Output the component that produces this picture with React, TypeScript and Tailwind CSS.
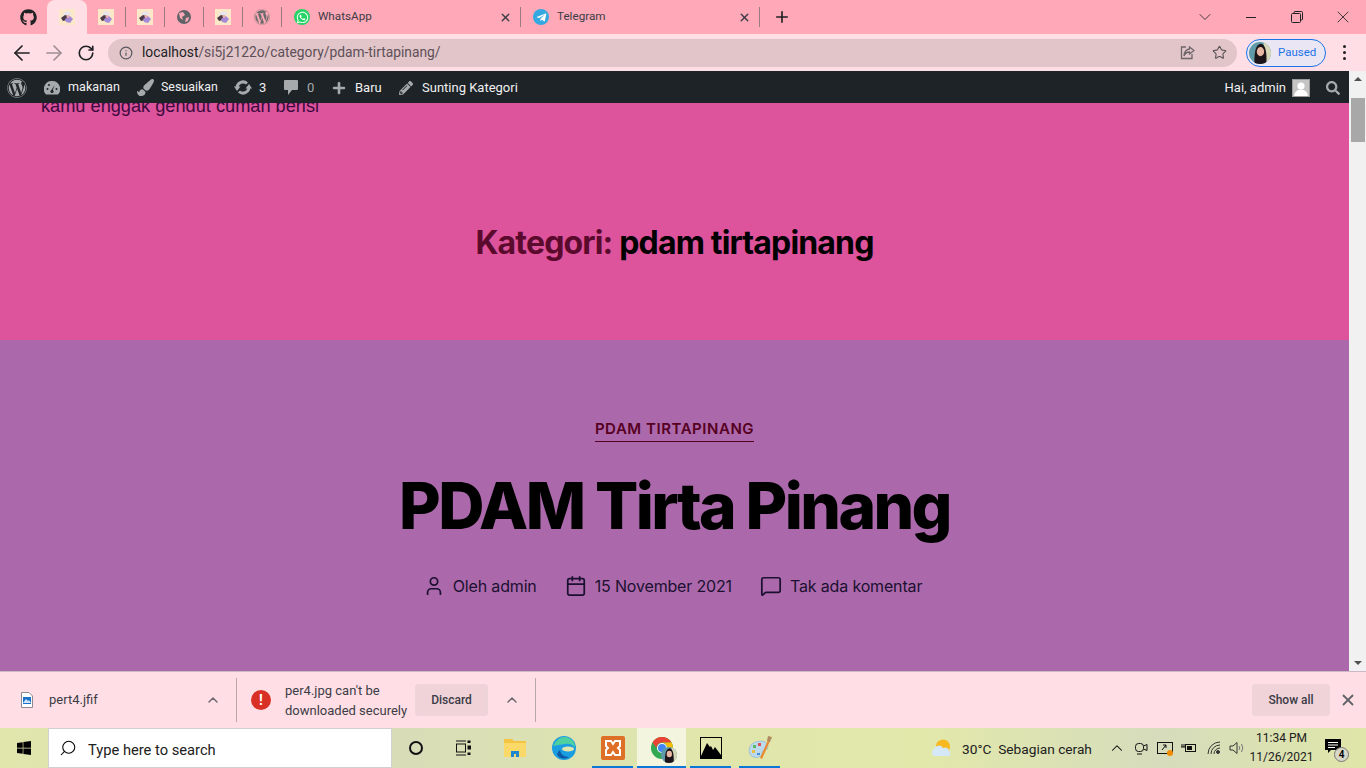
import { ReactNode } from "react";
import {
  ArrowLeft,
  ArrowRight,
  Calendar,
  ChevronDown,
  ChevronUp,
  Info,
  MessageSquare,
  Plus,
  RotateCw,
  Search,
  Star,
  User,
  X,
} from "lucide-react";
import {
  FaGithub,
  FaWhatsapp,
  FaWordpress,
  FaPaintBrush,
  FaPlus,
  FaPencilAlt,
  FaSearch,
  FaWindows,
  FaTelegramPlane,
} from "react-icons/fa";

const Favicon = () => (
  <svg width="16" height="16" viewBox="0 0 16 16">
    <rect width="16" height="16" fill="#fbe8c8" />
    <path d="M4 5 Q8 0 12 4 L12 6 H4 Z" fill="#e8e4ec" />
    <path d="M2 9 L6 6 L9 7 L8 11 L4 12 Z" fill="#4a3a48" />
    <path d="M6 10 L11 7 L14 10 L11 14 L7 13 Z" fill="#a58ad8" />
    <circle cx="9" cy="7.5" r="1.5" fill="#e8a8b0" />
  </svg>
);

const Sep = () => <div className="h-[20px] w-px bg-[#9c7a82]" />;

const SmallTab = ({ children }: { children: ReactNode }) => (
  <div className="flex h-[34px] w-[38px] items-center justify-center">{children}</div>
);

const LongTab = ({ icon, title }: { icon: ReactNode; title: string }) => (
  <div className="flex h-[34px] w-[238px] items-center pl-[12px] pr-[8px]">
    {icon}
    <span className="ml-[8px] flex-1 text-[11.7px] text-[#3c3c46]">{title}</span>
    <X size={13} strokeWidth={2.5} className="text-[#3c3c46]" />
  </div>
);

const TabBar = () => (
  <div className="flex h-[34px] items-center bg-[#ffa9b8]">
    <div className="flex w-[47px] items-center justify-center pl-[9px]">
      <FaGithub size={17} className="text-[#202124]" />
    </div>
    <div className="flex h-[34px] w-[40px] items-center justify-center rounded-t-[8px] bg-[#ffdfe5]">
      <Favicon />
    </div>
    <SmallTab>
      <Favicon />
    </SmallTab>
    <Sep />
    <SmallTab>
      <Favicon />
    </SmallTab>
    <Sep />
    <SmallTab>
      <svg width="16" height="16" viewBox="0 0 16 16">
        <circle cx="8" cy="8" r="7" fill="#5f6368" />
        <path d="M3 4 L7 3 L9 6 L6 8 L7 11 L4 9 Z M10 9 L13 8 L12 12 L9 13 Z" fill="#ffa9b8" />
      </svg>
    </SmallTab>
    <Sep />
    <SmallTab>
      <Favicon />
    </SmallTab>
    <Sep />
    <SmallTab>
      <FaWordpress size={16} className="text-[#6b6b6b]" />
    </SmallTab>
    <Sep />
    <LongTab
      title="WhatsApp"
      icon={
        <div className="flex h-[16px] w-[16px] items-center justify-center rounded-full bg-[#25d366]">
          <FaWhatsapp size={13} className="text-white" />
        </div>
      }
    />
    <Sep />
    <LongTab
      title="Telegram"
      icon={
        <div className="flex h-[16px] w-[16px] items-center justify-center rounded-full bg-[#34a8e0]">
          <FaTelegramPlane size={11} className="text-white" />
        </div>
      }
    />
    <Sep />
    <Plus size={18} strokeWidth={2.2} className="ml-[13px] text-[#202124]" />
    <div className="ml-auto flex items-center text-[#202124]">
      <ChevronDown size={20} strokeWidth={1} className="mr-[31px]" />
      <div className="mr-[35px] h-px w-[10px] bg-[#202124]" />
      <svg width="12" height="12" viewBox="0 0 12 12" fill="none" stroke="#202124" className="mr-[30px]">
        <rect x="0.5" y="2.5" width="9" height="9" rx="1" />
        <path d="M3 2.5 V1.5 a1 1 0 0 1 1 -1 H10.5 a1 1 0 0 1 1 1 V8 a1 1 0 0 1 -1 1 H9.5" />
      </svg>
      <X size={20} strokeWidth={1} className="mr-[13px]" />
    </div>
  </div>
);

const Avatar = ({ size }: { size: number }) => (
  <svg width={size} height={size} viewBox="0 0 24 24">
    <clipPath id={`av${size}`}>
      <circle cx="12" cy="12" r="12" />
    </clipPath>
    <g clipPath={`url(#av${size})`}>
      <rect width="24" height="24" fill="#5f9aa8" />
      <rect x="16" width="8" height="24" fill="#d8d8b8" />
      <path d="M6 24 Q5 3 13 2 Q20 3 19 24 Z" fill="#1c1418" />
      <ellipse cx="12.5" cy="10.5" rx="4" ry="5" fill="#e8b8a4" />
    </g>
  </svg>
);

const Toolbar = () => (
  <div className="flex h-[37px] items-center bg-[#ffdfe5]">
    <ArrowLeft size={24} strokeWidth={1.7} className="ml-[10px] text-[#202124]" />
    <ArrowRight size={24} strokeWidth={1.7} className="ml-[8px] text-[#a08e94]" />
    <RotateCw size={18} strokeWidth={2.2} className="ml-[11px] text-[#202124]" />
    <div className="ml-[13px] flex h-[28px] w-[1129px] items-center rounded-full bg-[#e1c5c9] pl-[11px] pr-[7px]">
      <Info size={14} strokeWidth={2} className="text-[#55555c]" />
      <span className="ml-[9px] text-[13.8px] text-[#5e5058]">
        <span className="text-[#202124]">localhost</span>/si5j2122o/category/pdam-tirtapinang/
      </span>
      <svg width="15" height="14" viewBox="0 0 15 14" fill="none" stroke="#6d6468" strokeWidth="1.3" className="ml-auto mr-[17px]">
        <path d="M6 1 H1.5 V12.5 H12 V8" />
        <path d="M9.5 1 L14 4.5 L9.5 8 V6 Q5.5 6 4 10 Q4.5 3.5 9.5 3 Z" />
      </svg>
      <Star size={15} strokeWidth={1.8} className="mr-[3px] text-[#5c5358]" />
    </div>
    <div className="ml-[9px] flex h-[28px] w-[80px] items-center rounded-full border border-[#1a73e8] bg-[#ebe6f4] pl-[2px]">
      <Avatar size={22} />
      <span className="ml-[7px] text-[11.5px] text-[#1a73e8]">Paused</span>
    </div>
    <div className="ml-[17px] flex flex-col gap-[3px]">
      <div className="h-[3px] w-[3px] rounded-full bg-[#202124]" />
      <div className="h-[3px] w-[3px] rounded-full bg-[#202124]" />
      <div className="h-[3px] w-[3px] rounded-full bg-[#202124]" />
    </div>
  </div>
);

const AdminBar = () => (
  <div className="flex h-[32px] items-center bg-[#1d2327] pt-[1px] text-[13px] whitespace-nowrap text-[#f0f0f1]">
    <FaWordpress size={20} className="ml-[7px] text-[#a7aaad]" />
    <svg width="16" height="14" viewBox="0 0 16 14" className="ml-[17px]">
      <path d="M8 0 A8 8 0 0 0 2 13.5 H14 A8 8 0 0 0 8 0 Z" fill="#a7aaad" />
      <path d="M8 11 L10.5 4.5 L7 9.5 Z" fill="#1d2327" />
      <circle cx="8" cy="10.5" r="1.6" fill="#1d2327" />
      <circle cx="3.5" cy="8" r="1" fill="#1d2327" />
      <circle cx="5" cy="4" r="1" fill="#1d2327" />
      <circle cx="12.5" cy="8" r="1" fill="#1d2327" />
    </svg>
    <span className="ml-[8px] w-[52px] text-[12.6px]">makanan</span>
    <FaPaintBrush size={17} className="ml-[17px] text-[#a7aaad]" />
    <span className="ml-[7px] w-[57px] text-[12.4px]">Sesuaikan</span>
    <svg width="18" height="15" viewBox="0 0 18 15" fill="none" className="ml-[16px]">
      <path d="M3 7.5 A6 6 0 0 1 13 3.5" stroke="#a7aaad" strokeWidth="3" />
      <path d="M15 7.5 A6 6 0 0 1 5 11.5" stroke="#a7aaad" strokeWidth="3" />
      <path d="M0 6.5 H6.5 L3 11 Z M18 8.5 H11.5 L15 4 Z" fill="#a7aaad" />
    </svg>
    <span className="ml-[7px] w-[7px]">3</span>
    <svg width="14" height="15" viewBox="0 0 14 15" className="ml-[18px]">
      <path d="M1 0 H13 a1 1 0 0 1 1 1 V9 a1 1 0 0 1 -1 1 H8 L4 15 V10 H1 a1 1 0 0 1 -1 -1 V1 a1 1 0 0 1 1 -1 Z" fill="#a7aaad" />
    </svg>
    <span className="ml-[9px] w-[7px] text-[#a7aaad]">0</span>
    <FaPlus size={14} className="ml-[18px] text-[#a7aaad]" />
    <span className="ml-[9px] w-[26px]">Baru</span>
    <FaPencilAlt size={14} className="ml-[18px] text-[#a7aaad]" />
    <span className="ml-[9px]">Sunting Kategori</span>
    <span className="ml-auto">Hai, admin</span>
    <div className="ml-[6px] flex h-[18px] w-[18px] items-end justify-center overflow-hidden border border-[#9a9a9a] bg-[#c4c4c4]">
      <svg width="14" height="15" viewBox="0 0 14 15" fill="#fff">
        <circle cx="7" cy="5" r="3.6" />
        <path d="M0 15 Q1 8.5 7 8.5 Q13 8.5 14 15 Z" />
      </svg>
    </div>
    <FaSearch size={14} className="ml-[16px] mr-[9px] text-[#a7aaad]" />
  </div>
);

const MetaItem = ({ icon, label }: { icon: ReactNode; label: string }) => (
  <div className="flex items-center gap-[8px]">
    {icon}
    <span>{label}</span>
  </div>
);

const Page = () => (
  <div className="h-[568px] overflow-hidden [font-family:Inter,sans-serif]">
    <header className="h-[237px] overflow-hidden bg-[#dd539c]">
      <p className="-mt-[8px] pl-[41px] text-[18.2px] leading-[22px] text-[#3d0a3f] [font-family:'Liberation_Sans',sans-serif]">
        kamu enggak gendut cuman berisi
      </p>
      <h1 className="mt-[106px] text-center text-[32px] leading-[40px] font-bold tracking-[-0.026em] text-black">
        <span className="text-[#5a0a2c]">Kategori:</span> pdam tirtapinang
      </h1>
    </header>
    <article className="flex h-[331px] flex-col items-center bg-[#ab69ab]">
      <a className="mt-[80px] border-b border-[#560022] pb-[3px] text-[15px] leading-[18px] font-semibold tracking-[0.036em] text-[#560022]">
        PDAM TIRTAPINANG
      </a>
      <h2 className="mt-[26px] text-[64px] leading-[76px] font-extrabold tracking-[-0.04em] text-black">
        PDAM Tirta Pinang
      </h2>
      <div className="mt-[30px] flex items-center gap-[28px] pr-[4px] text-[16px] leading-[24px] tracking-[-0.01em] text-[#1c1030]">
        <MetaItem icon={<User size={22} strokeWidth={1.9} className="text-[#1c1030]" />} label="Oleh admin" />
        <MetaItem icon={<Calendar size={22} strokeWidth={1.9} className="text-[#1c1030]" />} label="15 November 2021" />
        <MetaItem icon={<MessageSquare size={22} strokeWidth={1.9} className="text-[#1c1030]" />} label="Tak ada komentar" />
      </div>
    </article>
  </div>
);

const Scrollbar = () => (
  <div className="flex h-[600px] w-[17px] flex-col items-center bg-[#f1f1f1]">
    <div className="mt-[6px] h-0 w-0 border-x-[4px] border-b-[4px] border-x-transparent border-b-[#505050]" />
    <div className="mt-[17px] h-[44px] w-[14px] bg-[#a8a8a8]" />
    <div className="mt-auto mb-[6px] h-0 w-0 border-x-[4px] border-t-[4px] border-x-transparent border-t-[#505050]" />
  </div>
);

const DownloadBar = () => (
  <div className="flex h-[57px] items-center border-t border-[#cdb8c6] bg-[#ffdfe5] text-[12px] text-[#3c3c46]">
    <svg width="12" height="16" viewBox="0 0 12 16" className="ml-[21px]">
      <path d="M0.5 0.5 H8 L11.5 4 V15.5 H0.5 Z" fill="#fff" stroke="#8a8a94" />
      <rect x="2" y="5" width="8" height="7" fill="#1a73c8" />
      <path d="M2 11 L5 7 L7 9 L8 8 L10 11 Z" fill="#cfe4f8" />
    </svg>
    <span className="ml-[16px] w-[156px] text-[13px]">pert4.jfif</span>
    <ChevronUp size={16} strokeWidth={2.2} className="text-[#6e6a70]" />
    <div className="ml-[15px] h-[44px] w-px bg-[#b8a8ac]" />
    <div className="ml-[14px] flex h-[20px] w-[20px] items-center justify-center rounded-full bg-[#d93025] text-[14px] font-bold text-white">
      !
    </div>
    <div className="ml-[14px] w-[130px] pt-[1px] text-[13px] leading-[20px] whitespace-nowrap">
      <div>per4.jpg can't be</div>
      <div>downloaded securely</div>
    </div>
    <div className="flex h-[32px] w-[73px] items-center justify-center rounded-[3px] border border-[#ecd6dc] bg-[#f0d3d9] font-medium">
      Discard
    </div>
    <ChevronUp size={16} strokeWidth={2.2} className="ml-[16px] text-[#6e6a70]" />
    <div className="ml-[15px] h-[44px] w-px bg-[#b8a8ac]" />
    <div className="ml-auto flex h-[32px] w-[78px] items-center justify-center rounded-[3px] border border-[#ecd6dc] bg-[#f0d3d9] font-medium">
      Show all
    </div>
    <X size={18} strokeWidth={2.4} className="ml-[9px] mr-[9px] text-[#5f6368]" />
  </div>
);

const TaskIcon = ({ children, active, line }: { children: ReactNode; active?: boolean; line?: boolean }) => (
  <div className={`relative flex h-[40px] w-[49px] items-center justify-center ${active ? "bg-[#f3f5de]" : ""}`}>
    {children}
    {line && (
      <div className={`absolute bottom-0 h-[2px] bg-[#0a78d4] ${active ? "inset-x-0" : "inset-x-[4px]"}`} />
    )}
  </div>
);

const Taskbar = () => (
  <div className="flex h-[40px] items-center bg-[linear-gradient(90deg,#e0e6ac_0%,#d8ddb8_30%,#e0e6ac_50%,#e2e8aa_68%,#d6dcbc_85%,#e0e6a8_100%)] text-black">
    <div className="flex w-[48px] justify-center">
      <FaWindows size={16} />
    </div>
    <div className="flex h-[40px] w-[344px] items-center border border-[#d0d0d0] bg-white pl-[10px]">
      <Search size={18} strokeWidth={1.4} className="-scale-x-100" />
      <span className="ml-[11px] pt-[4px] text-[14.7px] text-[#202020]">Type here to search</span>
    </div>
    <TaskIcon>
      <div className="mr-[2px] h-[14px] w-[14px] rounded-full border-2 border-[#111]" />
    </TaskIcon>
    <TaskIcon>
      <svg width="16" height="16" viewBox="0 0 16 16" fill="none" stroke="#111" className="mr-[6px]">
        <path d="M1 1 H11 M1 15 H11" />
        <rect x="1.5" y="4" width="9" height="8" />
        <rect x="13" y="1" width="2" height="1.5" fill="#111" />
        <rect x="13" y="6" width="2.5" height="3" fill="#111" />
        <rect x="13" y="13" width="2" height="1.5" fill="#111" />
      </svg>
    </TaskIcon>
    <TaskIcon>
      <svg width="22" height="18" viewBox="0 0 22 18">
        <path d="M0 0 H8 L10 2 H22 V18 H0 Z" fill="#f4c542" />
        <rect y="4" width="22" height="14" fill="#fbd968" />
        <path d="M7 18 V12 H15 V18 H12 V15 H10 V18 Z" fill="#1f86d0" />
      </svg>
    </TaskIcon>
    <TaskIcon>
      <svg width="24" height="24" viewBox="0 0 24 24">
        <circle cx="12" cy="12" r="12" fill="#1b9de2" />
        <path d="M1 10 Q6 0 14 1 Q23 3 23 12 Q20 7 13 8 Q6 9 1 10 Z" fill="#4ed0a0" />
        <path d="M8 14 Q9 21 17 21 Q12 24 7 21 Q3 18 8 14 Z" fill="#0c59a4" />
        <ellipse cx="16" cy="13" rx="6" ry="2.5" fill="#e0e6ac" />
      </svg>
    </TaskIcon>
    <TaskIcon line>
      <svg width="24" height="24" viewBox="0 0 24 24">
        <rect width="24" height="24" rx="2" fill="#dd6f26" />
        <path d="M5 5 H10 L12 8 L14 5 H19 V10 L17 12 L19 14 V19 H14 L12 16 L10 19 H5 V14 L7 12 L5 10 Z" fill="none" stroke="#fff" strokeWidth="2" />
      </svg>
    </TaskIcon>
    <TaskIcon active line>
      <div className="relative h-[22px] w-[22px]">
        <svg width="22" height="22" viewBox="0 0 22 22">
          <circle cx="11" cy="11" r="11" fill="#34a853" />
          <path d="M11 0 A11 11 0 0 1 20.5 5.5 H11 A5.5 5.5 0 0 0 5.5 11 L1.5 5.5 A11 11 0 0 1 11 0 Z" fill="#ea4335" />
          <path d="M20.5 5.5 A11 11 0 0 1 11 22 L16 11 A5 5 0 0 0 11 5.5 Z" fill="#fbbc05" />
          <circle cx="11" cy="11" r="5" fill="#fff" />
          <circle cx="11" cy="11" r="4" fill="#4285f4" />
        </svg>
        <div className="absolute -right-[4px] -bottom-[4px] rounded-full">
          <Avatar size={16} />
        </div>
      </div>
    </TaskIcon>
    <TaskIcon line>
      <svg width="22" height="22" viewBox="0 0 22 22">
        <rect x="0.5" y="0.5" width="21" height="21" fill="none" stroke="#000" />
        <path d="M1 19 L7 6 L10 10 L11 9 L13 13 L15 10 L21 18 V21 H1 Z" fill="#000" />
      </svg>
    </TaskIcon>
    <TaskIcon line>
      <svg width="24" height="24" viewBox="0 0 24 24">
        <path d="M1 15 Q1 6 12 5 Q20 5 20 11 Q20 14 16 14 Q13 15 14 19 Q10 23 5 21 Q1 19 1 15 Z" fill="#bcd9ee" stroke="#7fa8c8" strokeWidth="0.5" />
        <rect x="5" y="9" width="3" height="3" fill="#5cb85c" />
        <rect x="10" y="7" width="3" height="3" fill="#e05050" />
        <rect x="4" y="14" width="3" height="3" fill="#e8c040" />
        <rect x="9" y="17" width="3" height="2" fill="#4a90d0" />
        <path d="M12 22 L20 4 L22 5 L14 23 Z" fill="#e88a30" />
        <path d="M19 5 L20 0 L24 1 L22 6 Z" fill="#b08a60" />
      </svg>
    </TaskIcon>
    <div className="ml-[147px] flex items-center">
      <svg width="22" height="18" viewBox="0 0 22 18">
        <circle cx="12" cy="7.5" r="7" fill="#f8b820" />
        <path d="M3 17 a4 4 0 0 1 0 -7 a5 5 0 0 1 9 -1 a4 4 0 0 1 6 3 a3 3 0 0 1 0 5 Z" fill="#d4e8f8" />
      </svg>
      <span className="ml-[9px] w-[132px] pt-[2px] text-[13.7px] whitespace-pre text-[#202020]">30°C  Sebagian cerah</span>
      <ChevronUp size={18} strokeWidth={1.4} className="ml-[14px]" />
      <svg width="14" height="14" viewBox="0 0 14 14" fill="none" stroke="#111" className="ml-[8px]">
        <rect x="1.5" y="2.5" width="8" height="8" rx="3" />
        <path d="M9.5 5 L13 3.5 V9.5 L9.5 8 M3 13 H8" />
      </svg>
      <svg width="17" height="15" viewBox="0 0 17 15" fill="none" stroke="#111" className="ml-[9px]">
        <rect x="0.5" y="1.5" width="15" height="11" />
        <path d="M5 9 L9 4 M6 4 H9 V7" />
        <circle cx="13" cy="12" r="3" fill="#f08c00" stroke="none" />
      </svg>
      <svg width="16" height="12" viewBox="0 0 16 12" fill="none" stroke="#111" className="ml-[7px]">
        <rect x="4.5" y="2.5" width="10" height="7" />
        <rect x="6" y="4" width="5" height="4" fill="#111" stroke="none" />
        <path d="M0 5 H4 M1 2 V5 M3 2 V5" />
      </svg>
      <svg width="14" height="14" viewBox="0 0 14 14" fill="none" stroke="#333" className="ml-[10px]">
        <path d="M1 13 A12 12 0 0 1 13 1 M4 13 A9 9 0 0 1 13 4 M7 13 A6 6 0 0 1 13 7" />
        <circle cx="11" cy="11" r="1.5" fill="#333" />
      </svg>
      <svg width="16" height="14" viewBox="0 0 16 14" fill="none" stroke="#333" className="ml-[8px]">
        <path d="M1 5 H4 L8 1.5 V12.5 L4 9 H1 Z" />
        <path d="M10 5 Q11.5 7 10 9 M12.5 3 Q15 7 12.5 11" stroke="#777" />
      </svg>
      <div className="ml-[3px] w-[67px] text-center text-[12px] leading-[19px] text-[#202020]">
        <div>11:34 PM</div>
        <div>11/26/2021</div>
      </div>
      <div className="relative ml-[10px] h-[24px] w-[16px]">
        <svg width="16" height="15" viewBox="0 0 16 15" className="mt-[3px]">
          <path d="M0 0 H16 V11 H6 L3 14 V11 H0 Z" fill="#000" />
          <path d="M3 3.5 H13 M3 6 H13 M3 8.5 H10" stroke="#fff" />
        </svg>
        <div className="absolute -right-[8px] bottom-[-2px] flex h-[15px] w-[15px] items-center justify-center rounded-full border border-[#777] bg-[#d8d8c8] text-[10px] font-semibold">
          4
        </div>
      </div>
    </div>
  </div>
);

export default function App() {
  return (
    <div className="h-[768px] w-[1366px] overflow-hidden [font-family:Roboto,sans-serif]">
      <TabBar />
      <Toolbar />
      <div className="flex">
        <div className="w-[1349px]">
          <AdminBar />
          <Page />
        </div>
        <Scrollbar />
      </div>
      <DownloadBar />
      <Taskbar />
    </div>
  );
}
